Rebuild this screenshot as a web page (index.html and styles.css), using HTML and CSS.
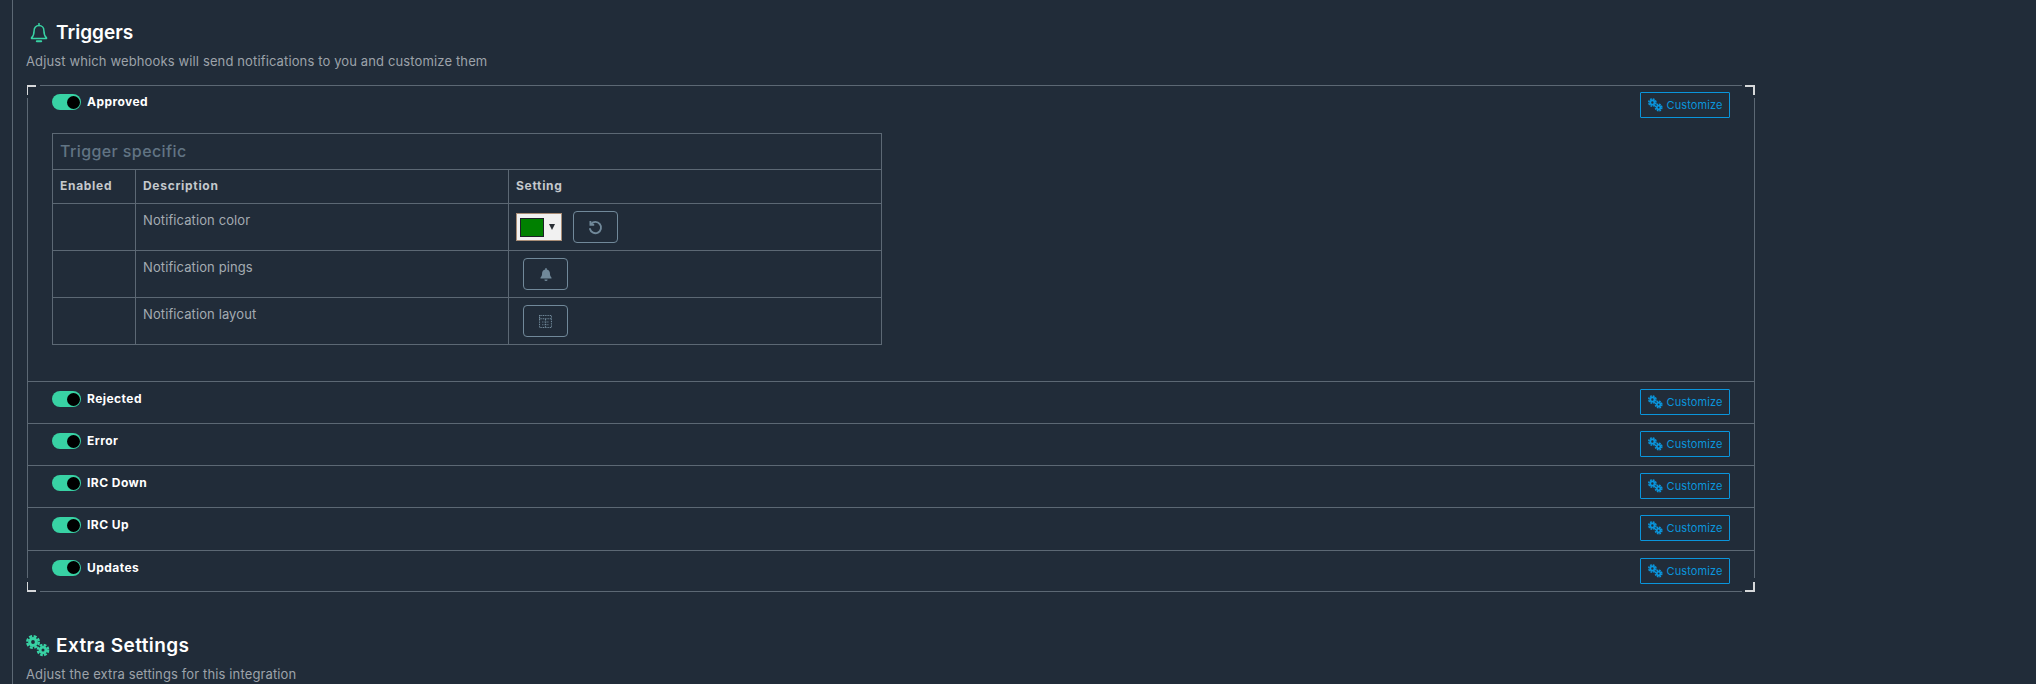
FILE: index.html
```html
<!DOCTYPE html>
<html lang="en">

<head>
  <meta charset="utf-8" />
  <title>Integration settings</title>
  <link rel="stylesheet" href="styles.css">
</head>

<body>
  <svg class="defs" width="0" height="0">
    <defs>
      <g id="gears">
        <g fill="none" stroke="currentColor">
          <circle cx="7" cy="7" r="3.4" stroke-width="3" />
          <circle cx="7" cy="7" r="5.8" stroke-width="2.4" stroke-dasharray="3 1.55" />
          <circle cx="17" cy="15" r="2.9" stroke-width="2.8" />
          <circle cx="17" cy="15" r="5.2" stroke-width="2.3" stroke-dasharray="2.7 1.4" />
        </g>
      </g>
    </defs>
  </svg>

  <main class="content">
    <h2 class="section-title">
      <svg class="title-icon bell-icon" viewBox="0 0 18 20" fill="none" stroke="currentColor" stroke-width="1.5">
        <path d="M9 2.6c-3 0-4.9 2.2-4.9 5.1 0 4.1-1 5.6-2.6 7.2v.6h15v-.6c-1.600-1.600-2.600-3.100-2.600-7.200C13.900 4.800 12 2.600 9 2.600Z" stroke-linejoin="round" />
        <path d="M9 .6v2" stroke-linecap="round" />
        <path d="M6.800 18.200h4.400" stroke-width="2" stroke-linecap="round" />
      </svg>
      Triggers
    </h2>
    <p class="section-sub">Adjust which webhooks will send notifications to you and customize them</p>

    <section class="frame">
      <i class="edge edge-top"></i>
      <i class="edge edge-bottom"></i>
      <i class="edge edge-left"></i>
      <i class="edge edge-right"></i>
      <i class="corner corner-tl"></i>
      <i class="corner corner-tr"></i>
      <i class="corner corner-bl"></i>
      <i class="corner corner-br"></i>

      <div class="trigger trigger-open">
        <div class="trigger-head">
          <label class="toggle"><span class="toggle-knob"></span></label>
          <span class="trigger-name">Approved</span>
          <button class="customize"><svg viewBox="0 0 24 22"><use href="#gears" /></svg>Customize</button>
        </div>

        <table class="specific">
          <colgroup>
            <col class="col-enabled">
            <col class="col-desc">
            <col class="col-setting">
          </colgroup>
          <tr>
            <td class="specific-caption" colspan="3">Trigger specific</td>
          </tr>
          <tr>
            <th>Enabled</th>
            <th>Description</th>
            <th>Setting</th>
          </tr>
          <tr>
            <td></td>
            <td>Notification color</td>
            <td>
              <div class="setting">
                <div class="picker"><span class="picker-color"></span><span class="picker-arrow"></span></div>
                <button class="icon-btn icon-btn-reset">
                  <svg viewBox="0 0 16 16" fill="none" stroke="currentColor" stroke-width="2">
                    <path d="M3.300 4.200A6 6 0 1 1 2.100 9.500" stroke-linecap="round" />
                    <path d="M2.600 1v4h4" />
                  </svg>
                </button>
              </div>
            </td>
          </tr>
          <tr>
            <td></td>
            <td>Notification pings</td>
            <td>
              <div class="setting setting-inset">
                <button class="icon-btn">
                  <svg viewBox="0 0 14 16" fill="currentColor">
                    <path d="M7 0c-.6 0-1 .4-1 1v.7C3.700 2.200 2.200 4 2.200 6.300c0 3.300-.9 4.400-2 5.600-.3.500 0 1.100.6 1.100h12.400c.6 0 .9-.6.600-1.100-1.100-1.200-2-2.300-2-5.600C11.800 4 10.300 2.200 8 1.700V1c0-.6-.4-1-1-1Z" />
                    <path d="M5 14h4a2 2 0 0 1-4 0Z" />
                  </svg>
                </button>
              </div>
            </td>
          </tr>
          <tr>
            <td></td>
            <td>Notification layout</td>
            <td>
              <div class="setting setting-inset">
                <button class="icon-btn icon-btn-layout">
                  <svg viewBox="0 0 12 12" fill="none" stroke="currentColor" stroke-width="1" stroke-dasharray="1 .6">
                    <rect x=".5" y=".5" width="11" height="11" />
                    <path d="M.5 3.500h11M3 6.500h2M7 6.500h2M3 9h2M7 9h2M6 3.500v8" />
                  </svg>
                </button>
              </div>
            </td>
          </tr>
        </table>
      </div>

      <div class="trigger">
        <div class="trigger-head">
          <label class="toggle"><span class="toggle-knob"></span></label>
          <span class="trigger-name">Rejected</span>
          <button class="customize"><svg viewBox="0 0 24 22"><use href="#gears" /></svg>Customize</button>
        </div>
      </div>
      <div class="trigger">
        <div class="trigger-head">
          <label class="toggle"><span class="toggle-knob"></span></label>
          <span class="trigger-name">Error</span>
          <button class="customize"><svg viewBox="0 0 24 22"><use href="#gears" /></svg>Customize</button>
        </div>
      </div>
      <div class="trigger">
        <div class="trigger-head">
          <label class="toggle"><span class="toggle-knob"></span></label>
          <span class="trigger-name">IRC Down</span>
          <button class="customize"><svg viewBox="0 0 24 22"><use href="#gears" /></svg>Customize</button>
        </div>
      </div>
      <div class="trigger">
        <div class="trigger-head">
          <label class="toggle"><span class="toggle-knob"></span></label>
          <span class="trigger-name">IRC Up</span>
          <button class="customize"><svg viewBox="0 0 24 22"><use href="#gears" /></svg>Customize</button>
        </div>
      </div>
      <div class="trigger">
        <div class="trigger-head">
          <label class="toggle"><span class="toggle-knob"></span></label>
          <span class="trigger-name">Updates</span>
          <button class="customize"><svg viewBox="0 0 24 22"><use href="#gears" /></svg>Customize</button>
        </div>
      </div>
    </section>

    <h2 class="section-title section-title-next">
      <svg class="title-icon gears-icon" viewBox="0 0 24 22"><use href="#gears" /></svg>
      <span class="title-wide">Extra Settings</span>
    </h2>
    <p class="section-sub">Adjust the extra settings for this integration</p>
  </main>
</body>

</html>
```

FILE: styles.css
```css
:root {
  --bg: #212c39;
  --line: #5c6874;
  --corner: #d6d8da;
  --green: #38d2a4;
  --blue: #0a95dc;
  --muted: #9da3aa;
  --btn-line: #71899a;
}

html,
body {
  height: 100%;
  margin: 0;
  overflow: hidden;
}

body {
  background-color: var(--bg);
  color: white;
  font-family: Inter, "Noto Sans", sans-serif;
  font-size: 13px;
}

.defs {
  position: absolute;
}

.content {
  height: 684px;
  box-sizing: border-box;
  margin-left: 12px;
  padding: 18px 0 0 13px;
  border-left: 1px solid var(--line);
}

.section-title {
  display: flex;
  align-items: center;
  height: 30px;
  margin: 0;
  font-size: 19px;
  font-weight: 600;
  line-height: 30px;
}

.section-title-next {
  margin-top: 39px;
}

.title-wide {
  letter-spacing: .4px;
}

.title-icon {
  flex: none;
  color: var(--green);
}

.bell-icon {
  width: 18px;
  height: 20px;
  margin: 0 8px 0 4px;
}

.gears-icon {
  width: 24px;
  height: 22px;
  margin-right: 6px;
}

.section-sub {
  height: 20px;
  margin: 3px 0 14px;
  color: var(--muted);
  font-size: 13px;
  letter-spacing: .13px;
  line-height: 20px;
}

/* bracket frame, the lines stop short of the corners */
.frame {
  position: relative;
  width: 1728px;
  height: 507px;
  box-sizing: border-box;
  margin-left: 1px;
  padding-top: 1px;
}

.edge {
  position: absolute;
  background: var(--line);
}

.edge-top,
.edge-bottom {
  left: 13px;
  right: 13px;
  height: 1px;
}

.edge-top {
  top: 0;
}

.edge-bottom {
  bottom: 0;
}

.edge-left,
.edge-right {
  top: 13px;
  bottom: 14px;
  width: 1px;
}

.edge-left {
  left: 0;
}

.edge-right {
  right: 0;
}

.corner {
  position: absolute;
  width: 8px;
  height: 8px;
  border: 0 solid var(--corner);
}

.corner-tl {
  top: 0;
  left: 0;
  border-width: 2px 0 0 1px;
}

.corner-tr {
  top: 0;
  right: 0;
  border-width: 2px 2px 0 0;
}

.corner-bl {
  bottom: 0;
  left: 0;
  border-width: 0 0 2px 1px;
}

.corner-br {
  bottom: 0;
  right: 0;
  border-width: 0 2px 2px 0;
}

.trigger {
  box-sizing: border-box;
  height: 42.15px;
  margin: 0 1px;
  padding: 7px 24px 0;
  border-top: 1px solid var(--line);
}

.trigger-open {
  height: 295px;
  padding-top: 6px;
  border-top: 0;
}

.trigger-head {
  display: flex;
  align-items: flex-start;
}

.toggle {
  flex: none;
  position: relative;
  width: 29px;
  height: 16px;
  margin-top: 2px;
  border-radius: 8px;
  background: var(--green);
}

.toggle-knob {
  position: absolute;
  top: 1.5px;
  right: 1.5px;
  width: 13px;
  height: 13px;
  border-radius: 50%;
  background: black;
}

.trigger-name {
  margin: 1px 0 0 6px;
  font-size: 12px;
  font-weight: 700;
  letter-spacing: .45px;
  line-height: 18px;
}

.customize {
  display: flex;
  align-items: center;
  justify-content: center;
  gap: 4px;
  width: 90px;
  height: 26px;
  margin-left: auto;
  padding: 0;
  border: 1px solid var(--blue);
  border-radius: 1px;
  background: transparent;
  color: var(--blue);
  font-family: inherit;
  font-size: 11px;
  letter-spacing: .1px;
}

.customize svg {
  width: 15px;
  height: 14px;
}

.specific {
  width: 830px;
  margin-top: 15px;
  border-collapse: collapse;
  table-layout: fixed;
}

.col-enabled {
  width: 83px;
}

.col-desc,
.col-setting {
  width: 373px;
}

.specific td,
.specific th {
  box-sizing: border-box;
  height: 47px;
  padding: 7px 7px 0;
  border: 1px solid var(--line);
  color: #a4abb2;
  font-size: 13px;
  letter-spacing: .1px;
  line-height: 18px;
  text-align: left;
  vertical-align: top;
}

.specific .specific-caption {
  height: 36px;
  padding-top: 6px;
  color: #617484;
  font-size: 16px;
  font-weight: 500;
  letter-spacing: .4px;
  line-height: 22px;
}

.specific th {
  height: 34px;
  color: #c4c8cc;
  font-size: 12px;
  font-weight: 700;
  letter-spacing: .7px;
}

.setting {
  display: flex;
  align-items: center;
  gap: 11px;
  height: 32px;
}

.setting-inset {
  margin-left: 7px;
}

.picker {
  display: flex;
  align-items: center;
  box-sizing: border-box;
  width: 46px;
  height: 28px;
  padding-left: 3px;
  border: 1px solid #a98d76;
  background: #f1f1f1;
}

.picker-color {
  box-sizing: border-box;
  width: 24px;
  height: 19px;
  border: 1px solid #1c2127;
  background: green;
}

.picker-arrow {
  width: 0;
  height: 0;
  margin-left: 5px;
  border: 3.500px solid transparent;
  border-top: 6px solid #2a2f35;
  border-bottom: 0;
}

.icon-btn {
  display: flex;
  align-items: center;
  justify-content: center;
  width: 45px;
  height: 32px;
  padding: 0;
  border: 1px solid var(--btn-line);
  border-radius: 4px;
  background: transparent;
  color: var(--btn-line);
}

.icon-btn svg {
  width: 12px;
  height: 13px;
}

.icon-btn-reset svg {
  width: 15px;
  height: 15px;
}

.icon-btn-layout svg {
  width: 13px;
  height: 13px;
}
```
